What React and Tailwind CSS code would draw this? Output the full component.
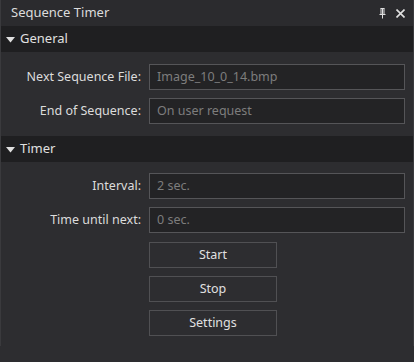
import React from 'react';

const Header = ({ title }) => (
    <div className="h-[26px] bg-[#1f1f21] flex items-center gap-[5px] pl-[5px] text-[13px] text-[#e0e0e0]">
        <svg width="9" height="6" viewBox="0 0 9 6" className="mt-[1px]">
            <path d="M0 0 H9 L4.5 5.5 Z" fill="#e0e0e0" />
        </svg>
        <span>{title}</span>
    </div>
);

const Field = ({ label, value }) => (
    <>
        <div className="text-right text-[12.5px] text-[#dcdcdc] leading-[26px]">{label}</div>
        <div className="h-[26px] border border-[#555558] bg-[#232325] px-[7px] text-[12.5px] leading-[24px] text-[#7d7d7d]">
            {value}
        </div>
    </>
);

const Btn = ({ children }) => (
    <button className="w-[128px] h-[26px] border border-[#505053] bg-[#2d2d30] text-[12.5px] text-[#e0e0e0]">
        {children}
    </button>
);

const App = () => {
    return (
        <div className="w-[414px] h-[362px] bg-[#2d2d30] font-['Noto_Sans',sans-serif] overflow-hidden">
            <div className="h-[346px] border-x border-[#3a3a3d] flex flex-col">
                <div className="h-[26px] flex items-center justify-between pl-[10px] pr-[8px] text-[13px] text-[#dcdcdc] bg-[#2b2b2e]">
                    <span>Sequence Timer</span>
                    <div className="flex items-center gap-[10px]">
                        <svg width="7" height="11" viewBox="0 0 7 11">
                            <path d="M1.5 0.5 H5.5 M2 0.5 V6 M5 0.5 V6 M3.5 0.5 V6 M0.5 6.5 H6.5 M3.5 7 V10.5" stroke="#e0e0e0" strokeWidth="1" fill="none" />
                        </svg>
                        <svg width="9" height="9" viewBox="0 0 9 9">
                            <path d="M0.5 0.5 L8.5 8.5 M8.5 0.5 L0.5 8.5" stroke="#e0e0e0" strokeWidth="1.6" />
                        </svg>
                    </div>
                </div>

                <Header title="General" />
                <div className="grid grid-cols-[140px_256px] gap-x-[8px] gap-y-[8px] pt-[12px] pb-[12px]">
                    <Field label="Next Sequence File:" value="Image_10_0_14.bmp" />
                    <Field label="End of Sequence:" value="On user request" />
                </div>

                <Header title="Timer" />
                <div className="grid grid-cols-[140px_256px] gap-x-[8px] gap-y-[8px] pt-[11px]">
                    <Field label="Interval:" value="2 sec." />
                    <Field label="Time until next:" value="0 sec." />
                </div>
                <div className="flex flex-col gap-[8px] pl-[148px] pt-[9px]">
                    <Btn>Start</Btn>
                    <Btn>Stop</Btn>
                    <Btn>Settings</Btn>
                </div>
            </div>
        </div>
    );
};

export default App;
